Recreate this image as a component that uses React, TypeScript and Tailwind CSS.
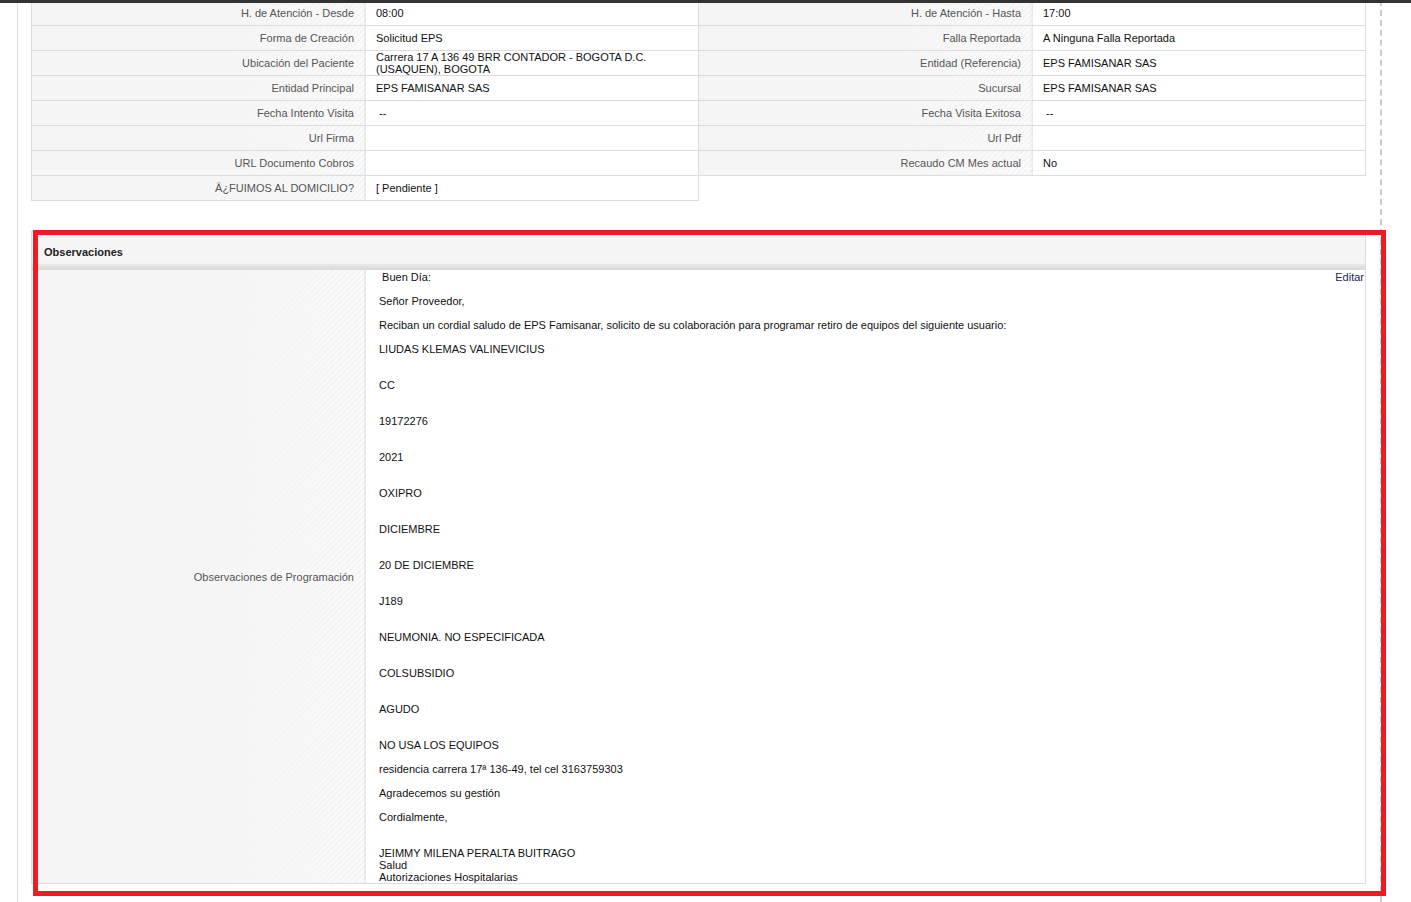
import React from "react";

const labelBg =
  "bg-[linear-gradient(90deg,#f5f5f5_0%,#f5f5f5_55%,rgba(245,245,245,0)_100%),repeating-linear-gradient(135deg,#f5f5f5_0px,#f5f5f5_2px,#fbfbfb_2px,#fbfbfb_4px)]";

type Row = [string, React.ReactNode, string?, React.ReactNode?];

const rows: Row[] = [
  ["H. de Atención - Desde", "08:00", "H. de Atención - Hasta", "17:00"],
  ["Forma de Creación", "Solicitud EPS", "Falla Reportada", "A Ninguna Falla Reportada"],
  [
    "Ubicación del Paciente",
    <span className="leading-[12px]">
      Carrera 17 A 136 49 BRR CONTADOR - BOGOTA D.C.
      <br />
      (USAQUEN), BOGOTA
    </span>,
    "Entidad (Referencia)",
    "EPS FAMISANAR SAS",
  ],
  ["Entidad Principal", "EPS FAMISANAR SAS", "Sucursal", "EPS FAMISANAR SAS"],
  ["Fecha Intento Visita", "\u00a0--", "Fecha Visita Exitosa", "\u00a0--"],
  ["Url Firma", "", "Url Pdf", ""],
  ["URL Documento Cobros", "", "Recaudo CM Mes actual", "No"],
];

function Label({ children, first }: { children?: React.ReactNode; first?: boolean }) {
  return (
    <div
      className={`flex items-center justify-end pr-[12px] border-b border-[#dddddd] text-[#555555] shadow-[inset_-3px_0_3px_-2px_rgba(0,0,0,0.10)] ${labelBg} ${
        first ? "border-l" : ""
      }`}
    >
      {children}
    </div>
  );
}

function Value({ children }: { children?: React.ReactNode }) {
  return (
    <div className="flex items-center pl-[10px] border-b border-r border-[#dddddd] text-[#111111] bg-white">
      {children}
    </div>
  );
}

const obs: { t: React.ReactNode; mb: string }[] = [
  { t: "\u00a0Buen Día:", mb: "mb-[12px]" },
  { t: "Señor Proveedor,", mb: "mb-[12px]" },
  {
    t: "Reciban un cordial saludo de EPS Famisanar, solicito de su colaboración para programar retiro de equipos del siguiente usuario:",
    mb: "mb-[12px]",
  },
  { t: "LIUDAS KLEMAS VALINEVICIUS", mb: "mb-[24px]" },
  { t: "CC", mb: "mb-[24px]" },
  { t: "19172276", mb: "mb-[24px]" },
  { t: "2021", mb: "mb-[24px]" },
  { t: "OXIPRO", mb: "mb-[24px]" },
  { t: "DICIEMBRE", mb: "mb-[24px]" },
  { t: "20 DE DICIEMBRE", mb: "mb-[24px]" },
  { t: "J189", mb: "mb-[24px]" },
  { t: "NEUMONIA. NO ESPECIFICADA", mb: "mb-[24px]" },
  { t: "COLSUBSIDIO", mb: "mb-[24px]" },
  { t: "AGUDO", mb: "mb-[24px]" },
  { t: "NO USA LOS EQUIPOS", mb: "mb-[12px]" },
  { t: "residencia carrera 17ª 136-49, tel cel 3163759303", mb: "mb-[12px]" },
  { t: "Agradecemos su gestión", mb: "mb-[12px]" },
  { t: "Cordialmente,", mb: "mb-[24px]" },
  {
    t: (
      <>
        JEIMMY MILENA PERALTA BUITRAGO
        <br />
        Salud
        <br />
        Autorizaciones Hospitalarias
      </>
    ),
    mb: "",
  },
];

export default function App() {
  return (
    <div className="relative min-h-[902px] bg-white font-['Liberation_Sans',Arial,sans-serif] text-[11px] leading-[12px]">
      <div className="absolute top-0 left-0 right-0 h-[3px] bg-[#333333] z-10" />
      <div className="ml-[17px] border-l border-[#e0e0e0] min-h-[902px]">
        <div className="w-[1364px] min-h-[902px] pl-[13px] pr-[14px] border-r-2 border-dashed border-[#cccccc]">
          {/* Details table */}
          <div className="w-[1335px] pt-[1px]">
            {rows.map((r, i) => (
              <div key={i} className="grid grid-cols-[335px_333px_334px_333px] h-[25px]">
                <Label first>{r[0]}</Label>
                <Value>{r[1]}</Value>
                <Label>{r[2]}</Label>
                <Value>{r[3]}</Value>
              </div>
            ))}
            <div className="grid grid-cols-[335px_333px] h-[25px]">
              <Label first>Â¿FUIMOS AL DOMICILIO?</Label>
              <Value>[ Pendiente ]</Value>
            </div>
          </div>

          {/* Observaciones panel */}
          <div className="mt-[30px] w-[1335px] border border-[#dddddd]">
            <div className="h-[38px] flex items-center pt-[1px] pl-[12px] font-bold text-[#222222] bg-[linear-gradient(180deg,#f5f5f5_0%,#f5f5f5_82%,#e6e6e2_86%,#d9d9d5_100%)]">
              Observaciones
            </div>
            <div className="grid grid-cols-[334px_1fr]">
              <div
                className={`flex items-center justify-end pr-[12px] text-[#555555] shadow-[inset_-3px_0_3px_-2px_rgba(0,0,0,0.10)] ${labelBg}`}
              >
                Observaciones de Programación
              </div>
              <div className="relative pl-[13px] pt-[1px] text-[#111111] bg-white">
                <a className="absolute top-[1px] right-[1px] text-[#1c2756]">Editar</a>
                {obs.map((o, i) => (
                  <div key={i} className={o.mb}>
                    {o.t}
                  </div>
                ))}
              </div>
            </div>
          </div>
        </div>
      </div>
      {/* red annotation frame */}
      <div className="absolute left-[33px] top-[230px] w-[1353px] h-[666px] border-[5px] border-[#ed1c24] pointer-events-none" />
    </div>
  );
}
